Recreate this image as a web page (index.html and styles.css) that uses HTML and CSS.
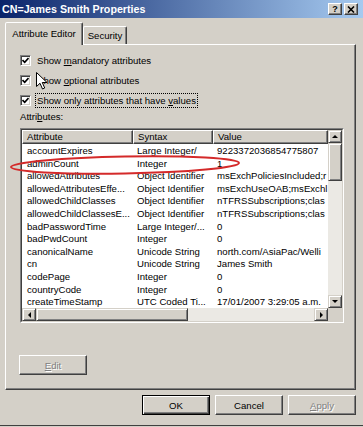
FILE: index.html
```html
<!DOCTYPE html>
<html lang="en">
<head>
  <meta charset="UTF-8" />
  <meta name="viewport" content="width=device-width, initial-scale=1.0"/>
  <title>CN=James Smith Properties</title>
  <link rel="stylesheet" href="styles.css">
</head>
<body>
  <div class="window">
    <div class="titlebar">
      <span class="title">CN=James Smith Properties</span>
      <div class="title-buttons">
        <span class="tbtn help">?</span>
        <span class="tbtn">
          <svg width="8" height="7" viewBox="0 0 8 7"><path d="M1 0.5 L7 6.5 M7 0.5 L1 6.5" stroke="#000" stroke-width="1.6"/></svg>
        </span>
      </div>
    </div>

    <div class="tabs">
      <div class="tab active">Attribute Editor</div>
      <div class="tab">Security</div>
    </div>

    <div class="panel">
      <div class="check">
        <span class="box"><svg width="7" height="7" viewBox="0 0 7 7"><path d="M0.5 3 L2.7 5.3 L6.5 1" fill="none" stroke="#000" stroke-width="1.6"/></svg></span>
        <span class="check-text">Show <u>m</u>andatory attributes</span>
      </div>
      <div class="check">
        <span class="box"><svg width="7" height="7" viewBox="0 0 7 7"><path d="M0.5 3 L2.7 5.3 L6.5 1" fill="none" stroke="#000" stroke-width="1.6"/></svg></span>
        <span class="check-text">Show <u>o</u>ptional attributes</span>
      </div>
      <div class="check">
        <span class="box"><svg width="7" height="7" viewBox="0 0 7 7"><path d="M0.5 3 L2.7 5.3 L6.5 1" fill="none" stroke="#000" stroke-width="1.6"/></svg></span>
        <span class="check-text focused">Show only attributes that have <u>v</u>alues</span>
      </div>

      <div class="list-label">Attri<u>b</u>utes:</div>

      <div class="listbox">
        <div class="listbox-inner">
          <div class="list-main">
            <div class="list-view">
              <div class="list-head">
                <span>Attribute</span>
                <span>Syntax</span>
                <span>Value</span>
              </div>
              <div class="row"><span>accountExpires</span><span>Large Integer/</span><span>9223372036854775807</span></div>
              <div class="row"><span>adminCount</span><span>Integer</span><span>1</span></div>
              <div class="row"><span>allowedAttributes</span><span>Object Identifier</span><span>msExchPoliciesIncluded;r</span></div>
              <div class="row"><span>allowedAttributesEffe...</span><span>Object Identifier</span><span>msExchUseOAB;msExchl</span></div>
              <div class="row"><span>allowedChildClasses</span><span>Object Identifier</span><span>nTFRSSubscriptions;clas</span></div>
              <div class="row"><span>allowedChildClassesE...</span><span>Object Identifier</span><span>nTFRSSubscriptions;clas</span></div>
              <div class="row"><span>badPasswordTime</span><span>Large Integer/...</span><span>0</span></div>
              <div class="row"><span>badPwdCount</span><span>Integer</span><span>0</span></div>
              <div class="row"><span>canonicalName</span><span>Unicode String</span><span>north.com/AsiaPac/Welli</span></div>
              <div class="row"><span>cn</span><span>Unicode String</span><span>James Smith</span></div>
              <div class="row"><span>codePage</span><span>Integer</span><span>0</span></div>
              <div class="row"><span>countryCode</span><span>Integer</span><span>0</span></div>
              <div class="row"><span>createTimeStamp</span><span>UTC Coded Ti...</span><span>17/01/2007 3:29:05 a.m.</span></div>
            </div>
            <div class="vscroll">
              <span class="sb-btn"><i class="arrow up"></i></span>
              <span class="sb-btn vthumb"></span>
              <span class="track"></span>
              <span class="sb-btn"><i class="arrow down"></i></span>
            </div>
          </div>
          <div class="hscroll-row">
            <div class="hscroll">
              <span class="sb-btn"><i class="arrow left"></i></span>
              <span class="sb-btn hthumb"></span>
              <span class="track"></span>
              <span class="sb-btn"><i class="arrow right"></i></span>
            </div>
            <div class="corner"></div>
          </div>
        </div>
      </div>

      <button class="btn edit" disabled><u>E</u>dit</button>
    </div>

    <div class="footer">
      <button class="btn default">OK</button>
      <button class="btn">Cancel</button>
      <button class="btn" disabled><u>A</u>pply</button>
    </div>

    <!-- red marker drawn over the list -->
    <svg class="highlight" width="236" height="22" viewBox="0 0 236 22">
      <ellipse cx="117" cy="11" rx="114" ry="8.5" fill="none" stroke="#d42a2a" stroke-width="2" transform="rotate(-1 117 11)"/>
    </svg>

    <svg class="cursor" width="12" height="18" viewBox="0 0 12 18">
      <path d="M0.5 0.5 L0.5 14.5 L4 11.3 L6.5 17 L8.7 16 L6.3 10.5 L11 10.5 Z" fill="#fff" stroke="#000" stroke-width="1"/>
    </svg>
  </div>
</body>
</html>
```

FILE: styles.css
```css
:root {
  --face: #d4d0c8;
  --light: #ffffff;
  --shadow: #808080;
  --dark: #404040;
  --track: #ebe9e4;
}

* {
  box-sizing: border-box;
  margin: 0;
  padding: 0;
}

body {
  font-family: "Liberation Sans", Arial, sans-serif;
  font-size: 9.6px;
  color: #000;
  background-color: var(--face);
}

.window {
  position: relative;
  width: 363px;
  height: 426px;
  background-color: var(--face);
  border-bottom: 1px solid var(--dark);
  overflow: hidden;
}

.titlebar {
  height: 18px;
  display: flex;
  align-items: center;
  justify-content: space-between;
  padding: 0 5px 0 2px;
  background: linear-gradient(to right, #0a246a, #a6caf0);
  color: var(--light);
  font-weight: bold;
  font-size: 10.7px;
}

.title-buttons {
  display: flex;
  gap: 2px;
}

.tbtn {
  width: 14px;
  height: 12px;
  display: flex;
  align-items: center;
  justify-content: center;
  background-color: var(--face);
  border: 1px solid;
  border-color: var(--light) var(--dark) var(--dark) var(--light);
  box-shadow: inset -1px -1px var(--shadow);
  color: #000;
  font-size: 9px;
}

.tabs {
  height: 26px;
  display: flex;
  align-items: flex-end;
  padding-left: 5px;
}

.tab {
  width: 44px;
  height: 18px;
  display: flex;
  align-items: center;
  justify-content: center;
  border: 1px solid;
  border-bottom: none;
  border-color: var(--light) var(--dark) transparent var(--light);
  border-radius: 2px 2px 0 0;
  box-shadow: inset -1px 0 var(--shadow);
}

.tab.active {
  width: 78px;
  height: 23px;
  margin-bottom: -1px;
  padding-bottom: 2px;
  position: relative;
  z-index: 1;
  background-color: var(--face);
}

.panel {
  width: 351px;
  height: 346px;
  margin-left: 5px;
  padding: 5px 0 0 14px;
  border: 1px solid;
  border-color: var(--light) var(--dark) var(--dark) var(--light);
  box-shadow: inset -1px -1px var(--shadow);
}

.check {
  height: 20px;
  display: flex;
  align-items: center;
}

.box {
  width: 11px;
  height: 11px;
  margin-right: 4px;
  display: flex;
  align-items: center;
  justify-content: center;
  background-color: var(--light);
  border: 1px solid;
  border-color: var(--shadow) var(--light) var(--light) var(--shadow);
  box-shadow: inset 1px 1px var(--dark), inset -1px -1px var(--face);
}

.check-text {
  padding: 1px;
  border: 1px solid transparent;
}

.check-text.focused {
  border: 1px dotted #000;
}

.list-label {
  height: 12px;
  margin-top: 1px;
  line-height: 12px;
}

.listbox {
  width: 324px;
  height: 195px;
  margin-top: 5px;
  border: 1px solid;
  border-color: var(--shadow) var(--light) var(--light) var(--shadow);
}

.listbox-inner {
  height: 100%;
  background-color: var(--light);
  border: 1px solid;
  border-color: var(--dark) var(--face) var(--face) var(--dark);
}

.list-main {
  height: 178px;
  display: flex;
}

.list-view {
  width: 306px;
  overflow: hidden;
}

.list-head,
.row {
  display: grid;
  grid-template-columns: 111px 80px 115px;
}

.list-head span {
  height: 14px;
  padding-left: 4px;
  line-height: 12px;
  background-color: var(--face);
  border: 1px solid;
  border-color: var(--light) var(--dark) var(--dark) var(--light);
  box-shadow: inset -1px -1px var(--shadow);
}

.row {
  height: 12.6px;
  line-height: 13px;
}

.row span {
  padding-left: 5px;
  white-space: nowrap;
  overflow: hidden;
}

.row span + span {
  padding-left: 4px;
}

.vscroll {
  width: 14px;
  display: flex;
  flex-direction: column;
  background-color: var(--track);
}

.track {
  flex: 1;
}

.sb-btn {
  width: 14px;
  height: 13px;
  display: flex;
  align-items: center;
  justify-content: center;
  flex-shrink: 0;
  background-color: var(--face);
  border: 1px solid;
  border-color: var(--face) var(--dark) var(--dark) var(--face);
  box-shadow: inset 1px 1px var(--light), inset -1px -1px var(--shadow);
}

.vthumb {
  height: 38px;
}

.hscroll-row {
  height: 13px;
  display: flex;
}

.hscroll {
  width: 306px;
  display: flex;
  background-color: var(--track);
}

.hthumb {
  width: 152px;
}

.corner {
  width: 14px;
  background-color: var(--face);
}

.arrow {
  width: 0;
  height: 0;
  border: 3px solid transparent;
}

.arrow.up {
  border-bottom-color: #000;
  border-top-width: 0;
  margin-bottom: 1px;
}

.arrow.down {
  border-top-color: #000;
  border-bottom-width: 0;
}

.arrow.left {
  border-right-color: #000;
  border-left-width: 0;
}

.arrow.right {
  border-left-color: #000;
  border-right-width: 0;
}

.btn {
  width: 68px;
  height: 20px;
  font-family: inherit;
  font-size: 9.6px;
  color: #000;
  background-color: var(--face);
  border: 1px solid;
  border-color: var(--light) var(--dark) var(--dark) var(--light);
  box-shadow: inset -1px -1px var(--shadow);
}

.btn:disabled {
  color: var(--shadow);
  text-shadow: 1px 1px var(--light);
}

.btn.default {
  border-color: #000;
  box-shadow: inset 1px 1px var(--light), inset -1px -1px var(--dark), inset -2px -2px var(--shadow);
}

.edit {
  margin-top: 32px;
  margin-left: -1px;
}

.footer {
  display: flex;
  justify-content: flex-end;
  gap: 5px;
  margin-top: 5px;
  padding-right: 7px;
}

.highlight {
  position: absolute;
  left: 8px;
  top: 154px;
}

.cursor {
  position: absolute;
  left: 36px;
  top: 72px;
}
```
